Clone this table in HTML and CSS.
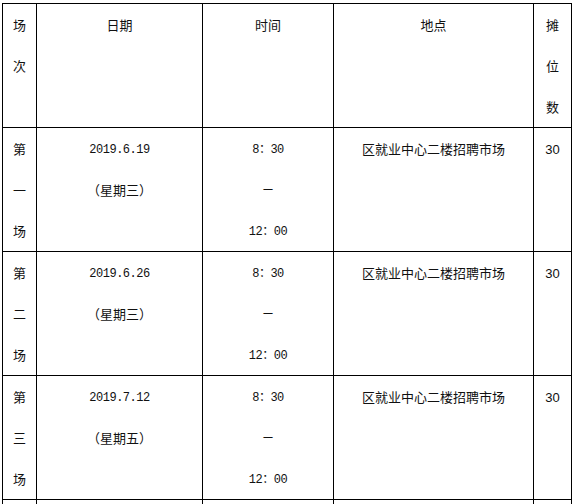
FILE: index.html
```html
<!DOCTYPE html>
<html lang="zh">
<head>
<meta charset="utf-8">
<link rel="stylesheet" href="styles.css">
</head>
<body>
<table class="schedule">
  <colgroup>
    <col class="c1"><col class="c2"><col class="c3"><col class="c4"><col class="c5">
  </colgroup>
  <tr>
    <td><div class="ln">场</div><div class="ln">次</div><div class="ln"></div></td>
    <td><div class="ln">日期</div></td>
    <td><div class="ln">时间</div></td>
    <td><div class="ln">地点</div></td>
    <td><div class="ln">摊</div><div class="ln">位</div><div class="ln">数</div></td>
  </tr>
  <tr>
    <td><div class="ln">第</div><div class="ln">一</div><div class="ln">场</div></td>
    <td><div class="ln num">2019.6.19</div><div class="ln">（星期三）</div></td>
    <td><div class="ln num">8：30</div><div class="ln dash">—</div><div class="ln num">12：00</div></td>
    <td><div class="ln">区就业中心二楼招聘市场</div></td>
    <td><div class="ln small">30</div></td>
  </tr>
  <tr>
    <td><div class="ln">第</div><div class="ln">二</div><div class="ln">场</div></td>
    <td><div class="ln num">2019.6.26</div><div class="ln">（星期三）</div></td>
    <td><div class="ln num">8：30</div><div class="ln dash">—</div><div class="ln num">12：00</div></td>
    <td><div class="ln">区就业中心二楼招聘市场</div></td>
    <td><div class="ln small">30</div></td>
  </tr>
  <tr>
    <td><div class="ln">第</div><div class="ln">三</div><div class="ln">场</div></td>
    <td><div class="ln num">2019.7.12</div><div class="ln">（星期五）</div></td>
    <td><div class="ln num">8：30</div><div class="ln dash">—</div><div class="ln num">12：00</div></td>
    <td><div class="ln">区就业中心二楼招聘市场</div></td>
    <td><div class="ln small">30</div></td>
  </tr>
  <tr>
    <td></td>
    <td></td>
    <td></td>
    <td></td>
    <td></td>
  </tr>
</table>
</body>
</html>
```

FILE: styles.css
```css
html, body {
  margin: 0;
  padding: 0;
  background: #fff;
}
body {
  padding: 3px 0 0 2px;
  font-family: "Noto Sans CJK SC", "Liberation Sans", sans-serif;
  font-size: 13px;
  color: #111;
}
.schedule {
  border-collapse: collapse;
  table-layout: fixed;
  width: 570px;
}
.c1 { width: 34px; }
.c2 { width: 166px; }
.c3 { width: 131px; }
.c4 { width: 200px; }
.c5 { width: 38px; }
.schedule td {
  border: 1px solid #000;
  padding: 0;
  text-align: center;
  vertical-align: top;
  height: 123px;
  white-space: nowrap;
}
.ln {
  height: 41px;
  line-height: 41px;
  overflow: hidden;
}
.num {
  font-family: "Liberation Mono", "Noto Sans CJK SC", monospace;
  font-size: 12px;
  letter-spacing: -0.5px;
  padding-top: 2px;
  height: 39px;
}
.dash {
  font-family: "Liberation Mono", monospace;
  font-size: 15px;
}
.small {
  font-family: "Liberation Sans", sans-serif;
  font-size: 13px;
  padding-top: 1px;
  height: 40px;
}
```
